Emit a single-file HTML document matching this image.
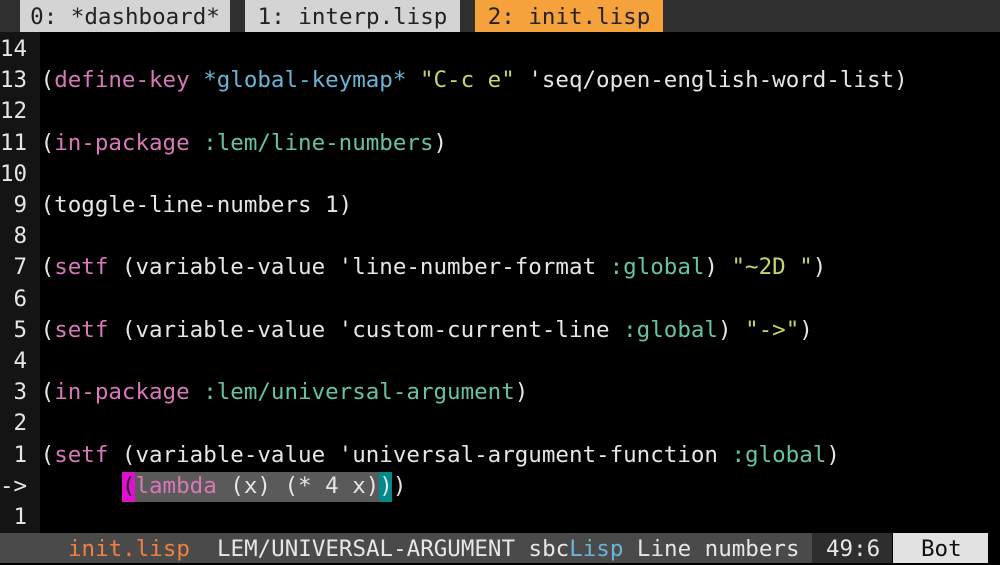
<!DOCTYPE html>
<html><head><meta charset="utf-8"><style>
body{margin:0;width:1000px;height:563px;background:#000;overflow:hidden;position:relative;font-family:"DejaVu Sans Mono","Liberation Mono",monospace;font-size:22.5px;color:#e6e6e6}
.a{position:absolute;white-space:pre;line-height:31.2px}
#tabs{position:absolute;left:0;top:0;width:1000px;height:32px;background:#303030}
.tab{position:absolute;top:0;height:32px;line-height:34px;color:#222;text-align:center}
#gut{position:absolute;left:0;top:32px;width:40px;height:501px;background:#141414}
.k{color:#d878b8}.kw{color:#66c2a5}.g{color:#6cb4d6}.s{color:#c8d46e}
#st{position:absolute;left:0;top:533px;width:1000px;height:30px;background:#000}
#code{position:absolute;left:0;top:34px}
</style></head><body>
<div id="tabs">
<div class="tab" style="left:20px;width:210px;background:#d4d4d4">0: *dashboard*</div>
<div class="tab" style="left:245px;width:215px;background:#d4d4d4">1: interp.lisp</div>
<div class="tab" style="left:475px;width:188px;background:#f5a23c">2: init.lisp</div>
</div>
<div id="gut"></div>
<div style="position:absolute;left:122px;top:472px;width:13px;height:30px;background:#e010d0"></div>
<div style="position:absolute;left:135px;top:472px;width:244px;height:30px;background:#5a5a5a"></div>
<div style="position:absolute;left:379px;top:472px;width:13px;height:30px;background:#008a8a"></div>
<div id="code">
<div class="a" style="left:0;top:0">14</div>
<div class="a" style="left:0;top:31.2px">13 (<span class="k">define-key</span> <span class="g">*global-keymap*</span> <span class="s">"C-c e"</span> 'seq/open-english-word-list)</div>
<div class="a" style="left:0;top:62.4px">12</div>
<div class="a" style="left:0;top:93.6px">11 (<span class="k">in-package</span> <span class="kw">:lem/line-numbers</span>)</div>
<div class="a" style="left:0;top:124.8px">10</div>
<div class="a" style="left:0;top:156px"> 9 (toggle-line-numbers 1)</div>
<div class="a" style="left:0;top:187.2px"> 8</div>
<div class="a" style="left:0;top:218.4px"> 7 (<span class="k">setf</span> (variable-value 'line-number-format <span class="kw">:global</span>) <span class="s">"~2D "</span>)</div>
<div class="a" style="left:0;top:249.6px"> 6</div>
<div class="a" style="left:0;top:280.8px"> 5 (<span class="k">setf</span> (variable-value 'custom-current-line <span class="kw">:global</span>) <span class="s">"-&gt;"</span>)</div>
<div class="a" style="left:0;top:312px"> 4</div>
<div class="a" style="left:0;top:343.2px"> 3 (<span class="k">in-package</span> <span class="kw">:lem/universal-argument</span>)</div>
<div class="a" style="left:0;top:374.4px"> 2</div>
<div class="a" style="left:0;top:405.6px"> 1 (<span class="k">setf</span> (variable-value 'universal-argument-function <span class="kw">:global</span>)</div>
<div class="a" style="left:0;top:436.8px">-&gt;       <span style="color:#222">(</span><span class="k">lambda</span> (x) (* 4 x)))</div>
<div class="a" style="left:0;top:468px"> 1</div>
</div>
<div id="st">
<div style="position:absolute;left:0;top:0;width:812px;height:30px;background:#4a4a4a"></div>
<div style="position:absolute;left:812px;top:0;width:80px;height:30px;background:#2e2e2e"></div>
<div style="position:absolute;left:893px;top:0;width:95px;height:30px;background:#e2e2e2"></div>
<div class="a" style="left:68px;top:0;line-height:32px;color:#f08040">init.lisp</div>
<div class="a" style="left:217px;top:0;line-height:32px">LEM/UNIVERSAL-ARGUMENT sbc<span class="g">Lisp</span> Line numbers</div>
<div class="a" style="left:826px;top:0;line-height:32px">49:6</div>
<div class="a" style="left:921px;top:0;line-height:32px;color:#111">Bot</div>
</div>
</body></html>
